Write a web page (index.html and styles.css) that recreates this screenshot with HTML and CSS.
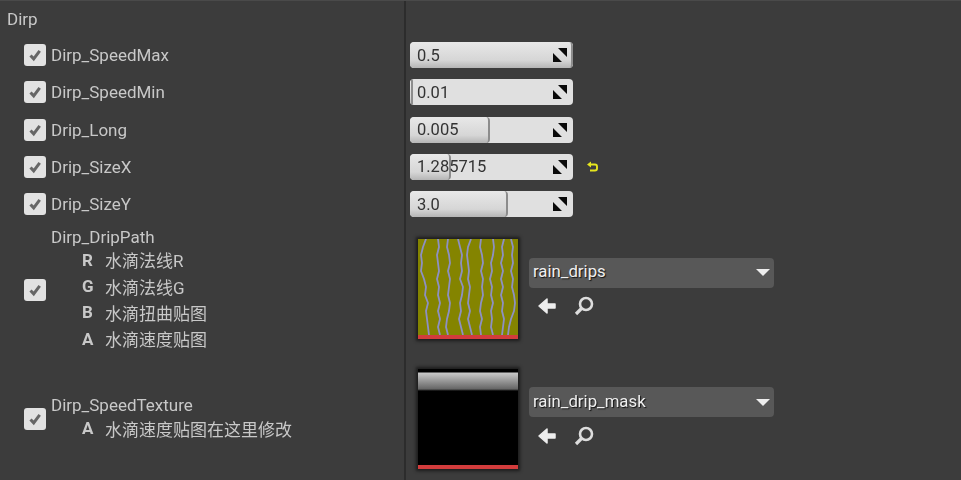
FILE: index.html
```html
<!DOCTYPE html>
<html lang="en">
<head>
  <meta charset="UTF-8" />
  <title>Dirp</title>
  <link rel="stylesheet" href="styles.css">
</head>
<body>
  <svg class="defs" width="0" height="0" aria-hidden="true">
    <symbol id="check" viewBox="0 0 22 22">
      <path d="M6.5 11.5l3.2 3.4 6-8" fill="none" stroke="#666" stroke-width="3" />
    </symbol>
    <symbol id="expand" viewBox="0 0 14 14">
      <path d="M5 0h9v9z M0 5v9h9z" fill="#0a0a0a" />
    </symbol>
    <symbol id="back" viewBox="0 0 20 18">
      <path d="M2 9L10 2v5h8v4h-8v5z" fill="#eee" stroke="#eee" stroke-width="1.5" stroke-linejoin="round" />
    </symbol>
    <symbol id="find" viewBox="0 0 20 20">
      <circle cx="12" cy="8" r="6" fill="none" stroke="#ddd" stroke-width="2.6" />
      <path d="M7.5 12.5L2 18" fill="none" stroke="#ddd" stroke-width="3.2" />
    </symbol>
  </svg>

  <div class="panel">
    <div class="name-col section">Dirp</div>
    <div class="value-col section"></div>

    <div class="name-col row">
      <span class="checkbox"><svg><use href="#check" /></svg></span>
      <span class="label">Dirp_SpeedMax</span>
    </div>
    <div class="value-col row">
      <div class="slider"><div class="fill" style="width: 100%"></div><span class="num">0.5</span><svg class="expand"><use href="#expand" /></svg></div>
    </div>

    <div class="name-col row">
      <span class="checkbox"><svg><use href="#check" /></svg></span>
      <span class="label">Dirp_SpeedMin</span>
    </div>
    <div class="value-col row">
      <div class="slider"><div class="fill" style="width: 2%"></div><span class="num">0.01</span><svg class="expand"><use href="#expand" /></svg></div>
    </div>

    <div class="name-col row">
      <span class="checkbox"><svg><use href="#check" /></svg></span>
      <span class="label">Drip_Long</span>
    </div>
    <div class="value-col row">
      <div class="slider"><div class="fill" style="width: 49%"></div><span class="num">0.005</span><svg class="expand"><use href="#expand" /></svg></div>
    </div>

    <div class="name-col row">
      <span class="checkbox"><svg><use href="#check" /></svg></span>
      <span class="label">Drip_SizeX</span>
    </div>
    <div class="value-col row">
      <div class="slider"><div class="fill" style="width: 25%"></div><span class="num">1.285715</span><svg class="expand"><use href="#expand" /></svg></div>
      <svg class="reset" viewBox="0 0 12 12"><path d="M5 .5L1 3.5 5 6.5z" fill="#e6e61e" /><path d="M3 3.5h6a2 2 0 0 1 2 2v2a2 2 0 0 1-2 2H4" fill="none" stroke="#e6e61e" stroke-width="1.9" /></svg>
    </div>

    <div class="name-col row">
      <span class="checkbox"><svg><use href="#check" /></svg></span>
      <span class="label">Drip_SizeY</span>
    </div>
    <div class="value-col row">
      <div class="slider"><div class="fill" style="width: 60%"></div><span class="num">3.0</span><svg class="expand"><use href="#expand" /></svg></div>
    </div>

    <div class="name-col tex-name tex-drip">
      <span class="checkbox"><svg><use href="#check" /></svg></span>
      <div class="tex-text">
        <div class="label">Dirp_DripPath</div>
        <div class="channel"><b>R</b><span>水滴法线R</span></div>
        <div class="channel"><b>G</b><span>水滴法线G</span></div>
        <div class="channel"><b>B</b><span>水滴扭曲贴图</span></div>
        <div class="channel"><b>A</b><span>水滴速度贴图</span></div>
      </div>
    </div>
    <div class="value-col tex-row tex-drip">
      <div class="thumb">
        <svg class="drips" viewBox="0 0 100 96" preserveAspectRatio="none">
          <g fill="none" stroke="#8d90c4" stroke-width="1.8" stroke-linejoin="round">
            <polyline points="8,0 5,8 3,16 4,24 3,32 6,40 8,48 7,56 10,64 8,72 9,80 10,88 11,96" />
            <polyline points="20,0 21,8 19,16 20,24 21,32 19,40 21,48 20,56 22,64 20,72 22,80 20,88 22,96" />
            <polyline points="30,0 29,8 31,16 32,24 30,32 32,40 31,48 30,56 32,64 31,72 29,80 28,88 30,96" />
            <polyline points="40,0 42,8 44,16 43,24 44,32 42,40 45,48 44,56 42,64 43,72 41,80 43,88 45,96" />
            <polyline points="53,0 50,8 49,16 50,24 51,32 50,40 52,48 51,56 50,64 52,72 50,80 52,88 54,96" />
            <polyline points="63,0 62,8 64,16 65,24 63,32 65,40 64,48 65,56 63,64 62,72 64,80 62,88 63,96" />
            <polyline points="75,0 76,8 75,16 73,24 74,32 72,40 74,48 73,56 75,64 73,72 74,80 73,88 75,96" />
            <polyline points="86,0 84,8 85,16 83,24 85,32 83,40 85,48 83,56 85,64 84,72 86,80 85,88 84,96" />
            <polyline points="93,0 95,8 94,16 95,24 93,32 95,40 94,48 96,56 97,64 96,72 93,80 91,88 90,96" />
          </g>
        </svg>
      </div>
      <div class="asset">
        <div class="combo"><span>rain_drips</span><i class="caret"></i></div>
        <div class="tools"><svg class="back"><use href="#back" /></svg><svg class="find"><use href="#find" /></svg></div>
      </div>
    </div>

    <div class="name-col tex-name tex-speed">
      <span class="checkbox"><svg><use href="#check" /></svg></span>
      <div class="tex-text">
        <div class="label">Dirp_SpeedTexture</div>
        <div class="channel"><b>A</b><span>水滴速度贴图在这里修改</span></div>
      </div>
    </div>
    <div class="value-col tex-row tex-speed">
      <div class="thumb thumb-mask"></div>
      <div class="asset">
        <div class="combo"><span>rain_drip_mask</span><i class="caret"></i></div>
        <div class="tools"><svg class="back"><use href="#back" /></svg><svg class="find"><use href="#find" /></svg></div>
      </div>
    </div>
  </div>
</body>
</html>
```

FILE: styles.css
```css
/* Reset and base */
* {
  box-sizing: border-box;
}
html, body {
  margin: 0;
  height: 100%;
}
body {
  background: #3c3c3c;
  color: #c8c8c8;
  font-family: Roboto, "Noto Sans CJK SC", sans-serif;
  font-size: 17px;
  overflow: hidden;
}
.defs {
  position: absolute;
}
/* Two column details panel */
.panel {
  display: grid;
  grid-template-columns: 406px 1fr;
  grid-template-rows: 35.5px repeat(5, 37.25px) 132.5px 1fr;
  height: 480px;
  border-top: 1px solid #4a4a4a;
  filter: blur(0.6px);
}
.name-col {
  display: flex;
  align-items: center;
  border-right: 2px solid #2c2c2c;
  padding-left: 24px;
}
.value-col {
  display: flex;
  align-items: center;
  padding-left: 4px;
}
.section {
  padding-left: 7px;
}
.checkbox {
  flex: none;
  width: 22px;
  height: 22px;
  margin-right: 5px;
  background: #e2e2e2;
  border-radius: 3px;
}
.checkbox svg {
  display: block;
  width: 22px;
  height: 22px;
}
/* Number sliders */
.slider {
  position: relative;
  display: flex;
  align-items: center;
  width: 163px;
  height: 26px;
  padding: 0 7px;
  background: #e0e0e0;
  border-radius: 4px;
  color: #333;
  font-size: 16.5px;
  overflow: hidden;
}
.fill {
  position: absolute;
  left: 0;
  top: 0;
  bottom: 0;
  background: linear-gradient(#e8e8e8, #d6d6d6 70%, #b5b5b5);
  border-right: 2px solid #8c8c8c;
  border-radius: 4px;
}
.num {
  position: relative;
}
.expand {
  position: relative;
  width: 14px;
  height: 14px;
  margin-left: auto;
  margin-right: -1px;
}
.reset {
  width: 12px;
  height: 12px;
  margin-left: 13px;
}
/* Texture rows */
.tex-name {
  align-items: flex-start;
}
.tex-drip .checkbox {
  margin-top: 56px;
}
.tex-drip .tex-text {
  margin-top: 5px;
}
.tex-drip .label {
  line-height: 19px;
}
.tex-speed .checkbox {
  margin-top: 53px;
}
.tex-speed .tex-text {
  margin-top: 40px;
}
.label {
  line-height: 20px;
}
.channel {
  display: flex;
  align-items: center;
  height: 26.3px;
  padding-left: 31px;
}
.channel b {
  width: 23px;
  font-weight: 700;
}
.tex-row {
  align-items: flex-start;
  padding-left: 12px;
}
.tex-drip .thumb {
  margin-top: 16px;
}
.tex-speed .thumb {
  margin-top: 14px;
}
.thumb {
  flex: none;
  width: 100px;
  height: 100px;
  box-shadow: 0 0 3px 2px #1c1c1c;
  border-bottom: 4px solid #d23c3c;
  background: #848400;
}
.drips {
  display: block;
  width: 100%;
  height: 100%;
}
.thumb-mask {
  background: linear-gradient(#000 0 3px, #c8c8c8 4px, #666 20px, #000 22px);
}
.asset {
  width: 245px;
  margin-left: 11px;
}
.tex-drip .asset {
  margin-top: 35px;
}
.tex-speed .asset {
  margin-top: 32px;
}
.tex-speed .tools {
  margin-top: 9px;
}
.combo {
  display: flex;
  align-items: center;
  justify-content: space-between;
  height: 30px;
  padding: 0 4px 3px;
  background: #585858;
  border-radius: 4px;
  color: #efefef;
  text-shadow: 1px 1px 1px #111;
  font-size: 16.8px;
}
.caret {
  margin-top: 3px;
  border-left: 7px solid transparent;
  border-right: 7px solid transparent;
  border-top: 7px solid #eee;
}
.tools {
  display: flex;
  align-items: center;
  gap: 17px;
  margin-top: 8px;
  padding-left: 8px;
}
.back {
  width: 20px;
  height: 18px;
}
.find {
  width: 20px;
  height: 20px;
}
```
